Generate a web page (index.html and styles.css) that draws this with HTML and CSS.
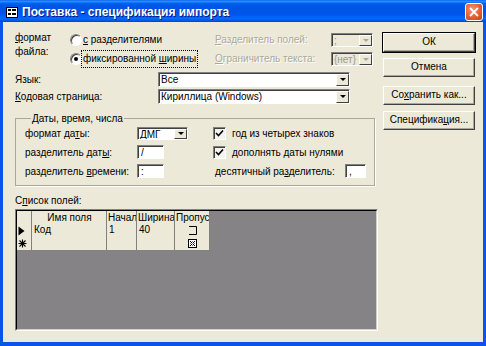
FILE: index.html
```html
<!DOCTYPE html>
<html lang="ru">
<head>
    <meta charset="UTF-8">
    <title>Поставка - спецификация импорта</title>
    <link rel="stylesheet" href="styles.css">
</head>
<body>
    <div class="window">
        <div class="titlebar">
            <svg class="app-icon" viewBox="0 0 12 11">
                <rect x="0.5" y="0.5" width="11" height="10" fill="#fff" stroke="#000"/>
                <rect x="2" y="2" width="3" height="2" fill="#000"/>
                <rect x="6" y="2" width="4" height="2" fill="#000"/>
                <rect x="2" y="6" width="3" height="2" fill="#000"/>
                <rect x="6" y="6" width="4" height="2" fill="#000"/>
            </svg>
            <span class="title">Поставка - спецификация импорта</span>
            <div class="close">
                <svg viewBox="0 0 17 17"><path d="M5 5 L12 12 M12 5 L5 12" stroke="#fff" stroke-width="2" stroke-linecap="square"/></svg>
            </div>
        </div>

        <div class="frame">
            <div class="main">
                <div class="format-row">
                    <div class="format-label"><u>ф</u>ормат<br>файла:</div>
                    <div class="radios">
                        <div class="radio"><span class="radio-dot"></span><span class="radio-text"><u>с</u> разделителями</span></div>
                        <div class="radio"><span class="radio-dot checked"></span><span class="radio-text focus">фиксированной <u>ш</u>ирины</span></div>
                    </div>
                    <div class="separators">
                        <div class="sep-row disabled">
                            <span><u>Р</u>азделитель полей:</span>
                            <div class="combo small off"><span class="combo-text">;</span><span class="combo-btn"><i></i></span></div>
                        </div>
                        <div class="sep-row disabled">
                            <span><u>О</u>граничитель текста:</span>
                            <div class="combo small off"><span class="combo-text">{нет}</span><span class="combo-btn"><i></i></span></div>
                        </div>
                    </div>
                </div>

                <div class="field-row">
                    <span>Язык:</span>
                    <div class="combo wide"><span class="combo-text">Все</span><span class="combo-btn"><i></i></span></div>
                </div>
                <div class="field-row second">
                    <span><u>К</u>одовая страница:</span>
                    <div class="combo wide"><span class="combo-text">Кириллица (Windows)</span><span class="combo-btn"><i></i></span></div>
                </div>

                <fieldset class="group">
                    <legend>Даты, время, числа</legend>
                    <div class="group-grid">
                        <span>формат да<u>т</u>ы:</span>
                        <div class="combo date"><span class="combo-text">ДМГ</span><span class="combo-btn"><i></i></span></div>
                        <div class="check-row"><span class="checkbox"><svg viewBox="0 0 9 9"><path d="M1 4 L3.5 6.5 L8 1.5" stroke="#000" stroke-width="1.6" fill="none"/></svg></span><span>год из четырех знаков</span></div>

                        <span>разделитель дат<u>ы</u>:</span>
                        <div class="textbox">/</div>
                        <div class="check-row"><span class="checkbox"><svg viewBox="0 0 9 9"><path d="M1 4 L3.5 6.5 L8 1.5" stroke="#000" stroke-width="1.6" fill="none"/></svg></span><span>дополнять даты нулями</span></div>

                        <span>разделитель <u>в</u>ремени:</span>
                        <div class="textbox">:</div>
                        <div class="decimal-row"><span>десятичный ра<u>з</u>делитель:</span><div class="textbox narrow">,</div></div>
                    </div>
                </fieldset>

                <div class="list-label">С<u>п</u>исок полей:</div>

                <div class="datasheet">
                    <div class="datasheet-inner">
                        <div class="ds-row head">
                            <span class="ds-sel"></span>
                            <span class="ds-cell center">Имя поля</span>
                            <span class="ds-cell">Начало</span>
                            <span class="ds-cell">Ширина</span>
                            <span class="ds-cell">Пропуск</span>
                        </div>
                        <div class="ds-row">
                            <span class="ds-sel"><svg class="arrow" viewBox="0 0 7 10"><path d="M0.5 0.5 L6.5 5 L0.5 9.5 Z" fill="#000"/></svg></span>
                            <span class="ds-cell pad">Код</span>
                            <span class="ds-cell pad">1</span>
                            <span class="ds-cell pad">40</span>
                            <span class="ds-cell center"><svg class="skip" viewBox="0 0 9 9"><path d="M1 0.5 H8.5 V8.5 H1" stroke="#000" fill="none"/></svg></span>
                        </div>
                        <div class="ds-row">
                            <span class="ds-sel"><svg class="star" viewBox="0 0 9 9"><path d="M4.5 0.5 V8.5 M0.5 4.5 H8.5 M1.5 1.5 L7.5 7.5 M7.5 1.5 L1.5 7.5" stroke="#000" stroke-width="1.1"/></svg></span>
                            <span class="ds-cell"></span>
                            <span class="ds-cell"></span>
                            <span class="ds-cell"></span>
                            <span class="ds-cell center"><svg class="skip" viewBox="0 0 9 9"><rect x="0.5" y="0.5" width="8" height="8" fill="#fff" stroke="#000"/><path d="M2 2 L7 7 M7 2 L2 7" stroke="#000"/><path d="M4.5 2 V7 M2 4.5 H7" stroke="#777" stroke-dasharray="1 1"/></svg></span>
                        </div>
                    </div>
                </div>
            </div>

            <div class="buttons">
                <div class="btn default">ОК</div>
                <div class="btn cancel">Отмена</div>
                <div class="btn save">Со<u>х</u>ранить как...</div>
                <div class="btn spec">Специфика<u>ц</u>ия...</div>
            </div>
        </div>
    </div>
</body>
</html>
```

FILE: styles.css
```css
* {
    margin: 0;
    padding: 0;
    box-sizing: border-box;
}

body {
    width: 486px;
    height: 346px;
    overflow: hidden;
    font-family: 'Liberation Sans', Arial, sans-serif;
    font-size: 10px;
    color: #000;
    background: #fff;
}

u {
    text-underline-offset: 1px;
}

.window {
    width: 486px;
    height: 346px;
    display: flex;
    flex-direction: column;
}

/* title bar */
.titlebar {
    height: 22px;
    display: flex;
    align-items: center;
    padding: 2px 3px 0 6px;
    color: #fff;
    background: linear-gradient(180deg, #0058ee 0%, #3593ff 5%, #127dff 10%, #0262ee 16%, #0057e5 24%, #0054e3 40%, #0055eb 60%, #005bf5 72%, #026afe 82%, #0062ef 90%, #0052d6 96%, #0040ab 100%);
}

.app-icon {
    width: 12px;
    height: 11px;
    margin-right: 4px;
}

.title {
    flex: 1;
    font-size: 12px;
    font-weight: bold;
    text-shadow: 1px 1px #0a1883;
}

.close {
    width: 18px;
    height: 18px;
    border: 1px solid #fff;
    border-radius: 3px;
    background: radial-gradient(circle at 40% 35%, #f29a74, #e35a2d 60%, #c8421b);
}

.close svg {
    display: block;
    width: 16px;
    height: 16px;
}

/* dialog body */
.frame {
    flex: 1;
    background: #ece9d8;
    border: 3px solid #0a55e8;
    border-top: 0;
    border-bottom-width: 4px;
    display: grid;
    grid-template-columns: 363px 92px;
    column-gap: 5px;
    align-items: start;
    padding: 9px 0 0 12px;
}

.main {
    display: flex;
    flex-direction: column;
}

.format-row {
    display: grid;
    grid-template-columns: 55px 143px 165px;
    height: 35px;
}

.format-label {
    line-height: 14px;
}

.radios {
    display: flex;
    flex-direction: column;
    gap: 2px;
}

.radio {
    height: 17px;
    display: flex;
    align-items: center;
}

.radio-dot {
    width: 12px;
    height: 12px;
    border-radius: 50%;
    border: 1px solid;
    border-color: #808080 #fff #fff #808080;
    background: #fff;
    box-shadow: inset 1px 1px #404040;
    display: flex;
    align-items: center;
    justify-content: center;
}

.radio-dot.checked::after {
    content: "";
    width: 4px;
    height: 4px;
    border-radius: 50%;
    background: #000;
}

.radio-text {
    border: 1px solid transparent;
    padding: 1px 1px 2px;
    margin-left: -1px;
    line-height: 13px;
}

.radio-text.focus {
    border: 1px dotted #000;
}

.separators {
    display: flex;
    flex-direction: column;
    gap: 2px;
}

.sep-row {
    height: 17px;
    display: flex;
    align-items: center;
    justify-content: space-between;
    padding: 0 5px 0 2px;
}

.disabled {
    color: #aca899;
    text-shadow: 1px 1px #fff;
}

/* combo boxes */
.combo {
    height: 15px;
    display: flex;
    background: #fff;
    border: 1px solid;
    border-color: #808080 #fff #fff #808080;
    box-shadow: inset 1px 1px #404040;
}

.combo.off {
    background: #ece9d8;
}

.combo.small {
    width: 42px;
    height: 14px;
}

.combo.wide {
    width: 192px;
}

.combo.date {
    width: 51px;
    height: 13px;
}

.combo-text {
    flex: 1;
    padding: 1px 0 0 2px;
    line-height: 11px;
    white-space: nowrap;
    overflow: hidden;
}

.off .combo-text {
    color: #9d9a8b;
    text-shadow: none;
}

.combo-btn {
    width: 13px;
    margin: 1px 0 0;
    background: #ece9d8;
    border: 1px solid;
    border-color: #fff #404040 #404040 #fff;
    display: flex;
    align-items: center;
    justify-content: center;
}

.combo-btn i {
    width: 0;
    height: 0;
    border-left: 3px solid transparent;
    border-right: 3px solid transparent;
    border-top: 3px solid #000;
}

.off .combo-btn i {
    border-top-color: #aca899;
}

.field-row {
    display: grid;
    grid-template-columns: 143px 192px;
    align-items: center;
    height: 16px;
    margin-top: 5px;
}

.field-row.second {
    margin-top: 1px;
}

/* dates group */
.group {
    margin-top: 8px;
    width: 360px;
    border: 1px solid #aca899;
    box-shadow: 1px 1px #fff;
    padding: 1px 0 7px 9px;
}

.group legend {
    margin-left: 6px;
    padding: 0 1px;
    line-height: 13px;
}

.group-grid {
    display: grid;
    grid-template-columns: 112px 76px 1fr;
    grid-template-rows: repeat(3, 14px);
    row-gap: 5px;
    align-items: center;
}

.textbox {
    width: 27px;
    height: 14px;
    background: #fff;
    border: 1px solid;
    border-color: #808080 #fff #fff #808080;
    box-shadow: inset 1px 1px #404040;
    padding: 1px 0 0 3px;
    line-height: 11px;
}

.textbox.narrow {
    width: 21px;
}

.check-row {
    display: flex;
    align-items: center;
    gap: 6px;
}

.checkbox {
    width: 13px;
    height: 13px;
    background: #f4f3ee;
    border: 1px solid;
    border-color: #808080 #fff #fff #808080;
    box-shadow: inset 1px 1px #404040;
    display: flex;
    align-items: center;
    justify-content: center;
}

.checkbox svg {
    width: 9px;
    height: 9px;
}

.decimal-row {
    display: flex;
    align-items: center;
    justify-content: space-between;
    padding: 0 8px 0 2px;
}

/* field list */
.list-label {
    margin-top: 8px;
    line-height: 13px;
}

.datasheet {
    margin-top: 2px;
    width: 363px;
    height: 122px;
    border: 1px solid;
    border-color: #808080 #fff #fff #808080;
}

.datasheet-inner {
    height: 100%;
    background: #858385;
    border: 1px solid;
    border-color: #000 #d4d0c8 #d4d0c8 #000;
}

.ds-row {
    width: 193px;
    height: 13px;
    display: grid;
    grid-template-columns: 15px 75px 30px 38px 35px;
    background: #ece9d8;
    line-height: 12px;
}

.ds-sel,
.ds-cell {
    border-right: 1px solid #808080;
    white-space: nowrap;
    overflow: hidden;
}

.ds-sel {
    display: flex;
    align-items: center;
    padding-left: 1px;
}

.ds-sel .arrow {
    width: 7px;
    height: 10px;
}

.ds-sel .star {
    width: 9px;
    height: 9px;
}

.ds-cell {
    padding-left: 1px;
}

.ds-cell.pad {
    padding-left: 2px;
}

.ds-cell.center {
    text-align: center;
}

.head .ds-cell {
    padding-top: 1px;
}

.skip {
    width: 9px;
    height: 9px;
    margin-top: 2px;
}

/* buttons */
.buttons {
    display: flex;
    flex-direction: column;
}

.btn {
    height: 19px;
    width: 92px;
    text-align: center;
    line-height: 16px;
    background: #ece9d8;
    border: 1px solid;
    border-color: #fff #404040 #404040 #fff;
    box-shadow: inset -1px -1px #aca899;
}

.btn.default {
    margin-top: 2px;
    outline: 1px solid #000;
    outline-offset: 0;
}

.btn.cancel {
    margin-top: 6px;
}

.btn.save {
    margin-top: 9px;
}

.btn.spec {
    margin-top: 6px;
}
```
